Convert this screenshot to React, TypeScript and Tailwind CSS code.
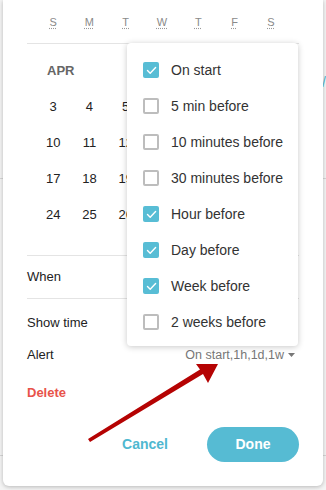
import React from 'react';

const WEEKDAYS = ['S', 'M', 'T', 'W', 'T', 'F', 'S'];
// only the first three columns show; the rest sit under the alert menu
const WEEKS = [
  [3, 4, 5],
  [10, 11, 12],
  [17, 18, 19],
  [24, 25, 26],
];

const ALERTS = [
  { label: 'On start', checked: true },
  { label: '5 min before', checked: false },
  { label: '10 minutes before', checked: false },
  { label: '30 minutes before', checked: false },
  { label: 'Hour before', checked: true },
  { label: 'Day before', checked: true },
  { label: 'Week before', checked: true },
  { label: '2 weeks before', checked: false },
];

function Checkbox({ checked }: { checked: boolean }) {
  if (checked) {
    return (
      <span className="flex h-4 w-4 items-center justify-center rounded-[2px] bg-[#58bdd5]">
        <svg width="11" height="9" viewBox="0 0 11 9" fill="none">
          <path d="M1.5 4.6 L4.2 7.2 L9.6 1.6" stroke="white" strokeWidth="1.4" strokeLinecap="round" strokeLinejoin="round" />
        </svg>
      </span>
    );
  }
  return <span className="h-4 w-4 rounded-[2px] border-2 border-[#bdbdbd] bg-white" />;
}

function AlertMenu() {
  return (
    <div className="absolute left-[124px] top-[43px] w-[171px] rounded-[4px] bg-white pb-[6px] pt-[9px] shadow-[0_1px_6px_rgba(0,0,0,0.22)]">
      {ALERTS.map((a) => (
        <div key={a.label} className="flex h-9 items-center gap-3 pl-4">
          <Checkbox checked={a.checked} />
          <span className="text-[14px] text-[#333]">{a.label}</span>
        </div>
      ))}
    </div>
  );
}

function Arrow() {
  return (
    <svg className="pointer-events-none absolute left-0 top-0" width="326" height="490">
      <polygon
        points="88,439 200,369.5 196,364 218,364 208,383 203,374 90,442"
        fill="#b50303"
      />
    </svg>
  );
}

export default function App() {
  return (
    <div
      className="relative h-[490px] w-[326px] overflow-hidden bg-[#f4f4f4]"
      style={{ fontFamily: '"Liberation Sans", Arial, sans-serif' }}
    >
      {/* page behind the dialog */}
      <div className="absolute left-0 right-0 top-[178px] h-px bg-[#d6d6d6]" />
      <div className="absolute left-0 right-0 top-[455px] h-px bg-[#d6d6d6]" />
      <span className="absolute left-[322px] top-[72px] text-[14px] text-[#4fb8d0]">/</span>

      <div className="relative mx-[3px] h-[486px] rounded-b-[6px] bg-white px-6 shadow-[0_1px_4px_rgba(0,0,0,0.25)]">
        <div className="ml-2 grid h-[43px] w-[254px] grid-cols-7 items-center pt-[2px]">
          {WEEKDAYS.map((d, i) => (
            <span
              key={i}
              className="text-center text-[11px] text-[#8a8a8a] underline decoration-dotted decoration-[#999] underline-offset-2"
            >
              {d}
            </span>
          ))}
        </div>
        <div className="h-px bg-[#e4e4e4]" />

        <div className="ml-2 mt-[9px] w-[254px]">
          <div className="flex h-9 items-center pl-[12px] text-[13px] font-bold text-[#666]">APR</div>
          {WEEKS.map((w) => (
            <div key={w[0]} className="grid h-9 grid-cols-7 items-center">
              {w.map((n) => (
                <span key={n} className="text-center text-[13px] text-[#222]">
                  {n}
                </span>
              ))}
            </div>
          ))}
        </div>

        <div className="mt-[22px] h-px bg-[#e4e4e4]" />
        <div className="flex h-[42px] items-center text-[13px] text-[#222]">When</div>
        <div className="h-px bg-[#e4e4e4]" />

        <div className="mt-[8px] flex h-8 items-center text-[13px] text-[#222]">Show time</div>
        <div className="flex h-8 items-center justify-between text-[13px]">
          <span className="text-[#222]">Alert</span>
          <span className="flex items-center gap-[4px] pr-[4px] text-[12.5px] text-[#777]">
            On start,1h,1d,1w
            <svg width="7" height="4" viewBox="0 0 7 4">
              <path d="M0 0 H7 L3.5 4 Z" fill="#777" />
            </svg>
          </span>
        </div>

        <div className="mt-[6px] flex h-8 items-center text-[13px] font-bold text-[#e8534a]">Delete</div>

        <div className="mt-[18px] flex items-center justify-end gap-[39px]">
          <button className="text-[14px] font-bold text-[#4fb8d0]">Cancel</button>
          <button className="h-[35px] w-[92px] rounded-full bg-[#56bbd3] text-[14px] font-bold text-white">
            Done
          </button>
        </div>

        <AlertMenu />
      </div>

      <Arrow />
    </div>
  );
}
